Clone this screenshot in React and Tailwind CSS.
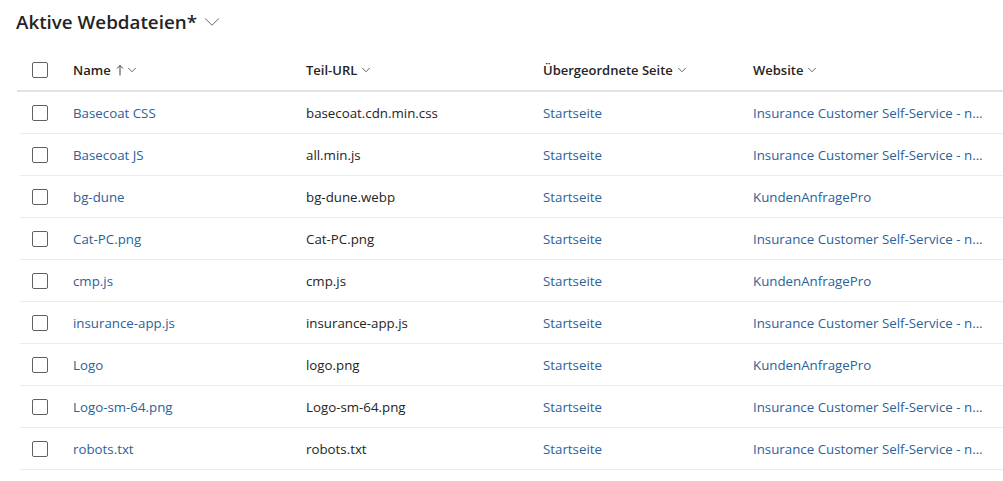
import { ChevronDown } from "lucide-react";

const rows = [
    { name: "Basecoat CSS", url: "basecoat.cdn.min.css", site: "Insurance Customer Self-Service - n..." },
    { name: "Basecoat JS", url: "all.min.js", site: "Insurance Customer Self-Service - n..." },
    { name: "bg-dune", url: "bg-dune.webp", site: "KundenAnfragePro" },
    { name: "Cat-PC.png", url: "Cat-PC.png", site: "Insurance Customer Self-Service - n..." },
    { name: "cmp.js", url: "cmp.js", site: "KundenAnfragePro" },
    { name: "insurance-app.js", url: "insurance-app.js", site: "Insurance Customer Self-Service - n..." },
    { name: "Logo", url: "logo.png", site: "KundenAnfragePro" },
    { name: "Logo-sm-64.png", url: "Logo-sm-64.png", site: "Insurance Customer Self-Service - n..." },
    { name: "robots.txt", url: "robots.txt", site: "Insurance Customer Self-Service - n..." },
];

function Checkbox() {
    return <div className="w-4 h-4 border border-[#616161] rounded-[2px] bg-white" />;
}

function SortArrow() {
    return (
        <svg width="8" height="12" viewBox="0 0 8 12" fill="none" stroke="#424242" strokeWidth="1" className="ml-[5px]">
            <path d="M4 1.5V11.5M1 4.5L4 1.5L7 4.5" />
        </svg>
    );
}

function HeaderCell({ label, width, sorted }) {
    return (
        <div className={`flex items-center ${width}`}>
            <span className="mt-[2px] font-semibold text-[13px] text-[#242424]">{label}</span>
            {sorted && <SortArrow />}
            <ChevronDown size={14} strokeWidth={1.4} className={sorted ? "ml-[1px] text-[#424242]" : "ml-[2px] text-[#424242]"} />
        </div>
    );
}

export default function App() {
    return (
        <div className="w-[1003px] h-[481px] overflow-hidden bg-white text-[13.3px] font-['Open_Sans','Noto_Sans',sans-serif] text-[#242424]">
            <div className="h-[50px] pl-4 pt-[9px] flex items-start">
                <h1 className="text-[18.8px] leading-[26px] font-semibold text-[#242424]">Aktive Webdateien*</h1>
                <ChevronDown size={26} strokeWidth={0.9} className="ml-[2px] text-[#616161]" />
            </div>
            <div className="ml-[17px] h-[42px] flex items-center border-b-2 border-[#e3e3e3]">
                <div className="w-[56px] pl-[15px]"><Checkbox /></div>
                <HeaderCell label="Name" width="w-[233px]" sorted />
                <HeaderCell label="Teil-URL" width="w-[237px]" />
                <HeaderCell label="Übergeordnete Seite" width="w-[210px]" />
                <HeaderCell label="Website" width="flex-1" />
            </div>
            {rows.map((row) => (
                <div key={row.name} className="ml-[20px] h-[42px] pt-px flex items-center border-b border-[#ebebeb]">
                    <div className="w-[53px] pl-[12px]"><Checkbox /></div>
                    <div className="mt-[2px] w-[233px] text-[#2a6299]">{row.name}</div>
                    <div className="mt-[2px] w-[237px]">{row.url}</div>
                    <div className="mt-[2px] w-[210px] text-[#2a6299]">Startseite</div>
                    <div className="mt-[2px] flex-1 text-[#2a6299]">{row.site}</div>
                </div>
            ))}
        </div>
    );
}
